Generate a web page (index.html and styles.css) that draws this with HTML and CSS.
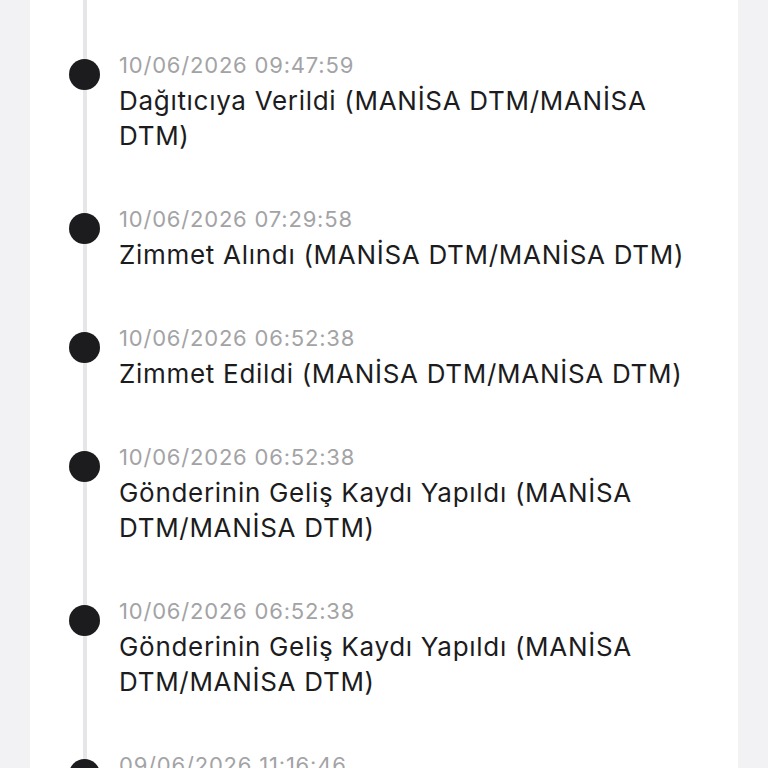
FILE: index.html
```html
<!DOCTYPE html>
<html lang="tr">
<head>
    <meta charset="UTF-8">
    <meta name="viewport" content="width=device-width, initial-scale=1.0">
    <title>Gönderi Hareketleri</title>
    <link rel="stylesheet" href="styles.css">
</head>
<body>
    <div class="card">
        <ul class="timeline">
            <li class="event">
                <span class="dot"></span>
                <div class="event-body">
                    <div class="event-time">10/06/2026 09:47:59</div>
                    <div class="event-title">Dağıtıcıya Verildi (MANİSA DTM/MANİSA DTM)</div>
                </div>
            </li>
            <li class="event">
                <span class="dot"></span>
                <div class="event-body">
                    <div class="event-time">10/06/2026 07:29:58</div>
                    <div class="event-title">Zimmet Alındı (MANİSA DTM/MANİSA DTM)</div>
                </div>
            </li>
            <li class="event">
                <span class="dot"></span>
                <div class="event-body">
                    <div class="event-time">10/06/2026 06:52:38</div>
                    <div class="event-title">Zimmet Edildi (MANİSA DTM/MANİSA DTM)</div>
                </div>
            </li>
            <li class="event">
                <span class="dot"></span>
                <div class="event-body">
                    <div class="event-time">10/06/2026 06:52:38</div>
                    <div class="event-title">Gönderinin Geliş Kaydı Yapıldı (MANİSA DTM/MANİSA DTM)</div>
                </div>
            </li>
            <li class="event">
                <span class="dot"></span>
                <div class="event-body">
                    <div class="event-time">10/06/2026 06:52:38</div>
                    <div class="event-title">Gönderinin Geliş Kaydı Yapıldı (MANİSA DTM/MANİSA DTM)</div>
                </div>
            </li>
            <li class="event">
                <span class="dot"></span>
                <div class="event-body">
                    <div class="event-time">09/06/2026 11:16:46</div>
                </div>
            </li>
        </ul>
    </div>
</body>
</html>
```

FILE: styles.css
```css
* {
    box-sizing: border-box;
    margin: 0;
    padding: 0;
}

html, body {
    height: 100%;
    overflow: hidden;
}

body {
    font-family: Inter, 'Noto Sans', sans-serif;
    background: #f2f2f4;
    color: #1c1c1e;
    padding: 0 30px;
}

.card {
    background: linear-gradient(to right, transparent 53px, #e6e6e8 53px, #e6e6e8 57px, transparent 57px), #fff;
    padding: 47px 0 40px;
    min-height: 900px;
}

.timeline {
    list-style: none;
}

.event {
    display: flex;
    align-items: flex-start;
    margin-bottom: 48px;
}

.dot {
    flex: 0 0 31px;
    height: 31px;
    margin: 12px 19px 0 39px;
    border-radius: 50%;
    background: #1c1c1e;
}

.event-body {
    flex: 0 1 582px;
}

.event-time {
    font-size: 22px;
    line-height: 36px;
    letter-spacing: 0.8px;
    color: #a3a3a6;
}

.event-title {
    font-size: 26px;
    line-height: 35px;
    letter-spacing: 0.7px;
    color: #1c1c1e;
}
```
